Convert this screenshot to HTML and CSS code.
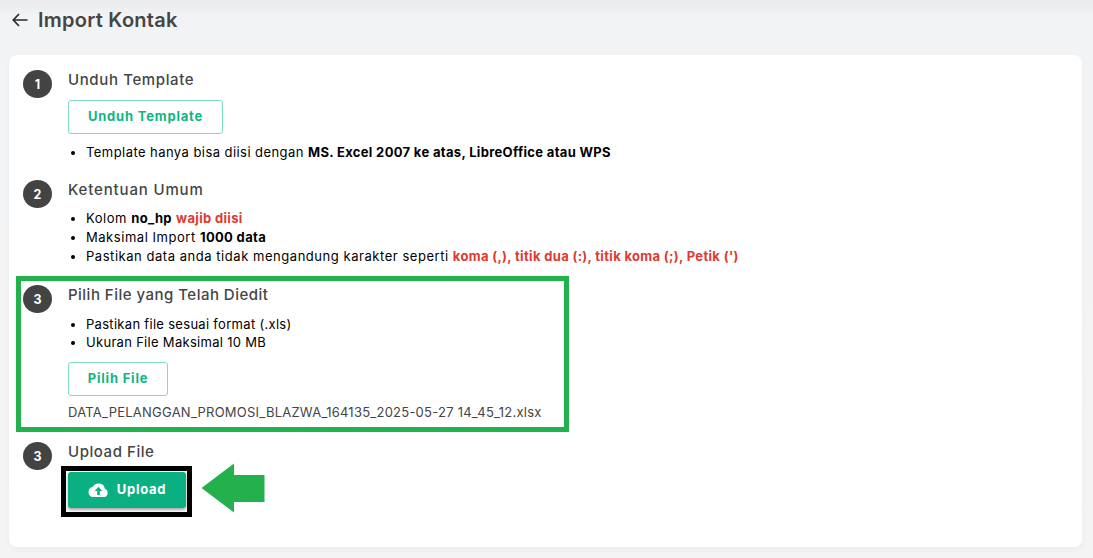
FILE: index.html
```html
<!DOCTYPE html>
<html lang="id">
<head>
<meta charset="utf-8">
<title>Import Kontak</title>
<link rel="stylesheet" href="styles.css">
</head>
<body>
<header class="topbar">
  <svg class="back" viewBox="0 0 16 14" width="16" height="14"><path d="M15.500 7H1.500M7 1 1.300 7 7 13" fill="none" stroke="#2b2b2b" stroke-width="1.700"/></svg>
  <h1>Import Kontak</h1>
</header>
<main class="card">
  <section class="step step-one">
    <span class="num">1</span>
    <div class="body">
      <h2>Unduh Template</h2>
      <button class="outline wide">Unduh Template</button>
      <ul class="list-one"><li>Template hanya bisa diisi dengan <b>MS. Excel 2007 ke atas, LibreOffice atau WPS</b></li></ul>
    </div>
  </section>
  <section class="step step-two">
    <span class="num">2</span>
    <div class="body">
      <h2>Ketentuan Umum</h2>
      <ul class="list-two">
        <li>Kolom <b>no_hp</b> <b class="red">wajib diisi</b></li>
        <li>Maksimal Import <b>1000 data</b></li>
        <li>Pastikan data anda tidak mengandung karakter seperti <b class="red">koma (,), titik dua (:), titik koma (;), Petik (')</b></li>
      </ul>
    </div>
  </section>
  <section class="step step-three">
    <span class="num">3</span>
    <div class="body">
      <h2>Pilih File yang Telah Diedit</h2>
      <ul class="list-three">
        <li>Pastikan file sesuai format (.xls)</li>
        <li>Ukuran File Maksimal 10 MB</li>
      </ul>
      <button class="outline narrow">Pilih File</button>
      <p class="filename">DATA_PELANGGAN_PROMOSI_BLAZWA_164135_2025-05-27 14_45_12.xlsx</p>
    </div>
    <div class="mark"></div>
  </section>
  <section class="step step-four">
    <span class="num">3</span>
    <div class="body">
      <h2>Upload File</h2>
      <div class="upload-row">
        <div class="black-frame">
          <button class="upload">
            <svg viewBox="0 0 24 16" width="21" height="14"><path fill="#fff" d="M19.300 6.600A7.400 7.400 0 0 0 12 .5a7.300 7.300 0 0 0-6.600 4A5.800 5.800 0 0 0 6 16h13a5 5 0 0 0 .3-9.400Z"/><path fill="#0bb082" d="M12 4.200 7.600 9h2.900v4.600h3V9h2.900Z"/></svg>
            <span class="upload-label">Upload</span>
          </button>
        </div>
        <svg class="arrow" viewBox="0 0 64 50" width="64" height="50"><path fill="#22b14c" d="M0.500 25 33 .5V12h30.500v27H33v10.500Z"/></svg>
      </div>
    </div>
  </section>
</main>
</body>
</html>
```
FILE: styles.css
```css
* { box-sizing: border-box; }
html, body { margin: 0; height: 558px; overflow: hidden; }
body {
  background: linear-gradient(#e9eaec 0, #f2f3f4 16px, #f4f4f5 100%);
  font-family: Inter, "Open Sans", sans-serif;
  color: #000;
  padding: 0 11px 0 9px;
}
.topbar { height: 55px; display: flex; align-items: flex-start; padding: 13px 0 0 3px; gap: 10px; }
h1 { margin: -5px 0 0; font-size: 20px; line-height: 24px; font-weight: 600; color: #454545; letter-spacing: 0.25px; }
.card {
  height: 492px;
  background: #fff;
  border-radius: 8px;
  padding: 15px 0 0 14px;
  box-shadow: 0 2px 6px rgba(0,0,0,.04);
}
.step { display: flex; position: relative; gap: 16px; }
.num {
  flex: none;
  width: 29px; height: 28px;
  border-radius: 50%;
  background: #434343;
  color: #fff;
  font-size: 12.500px;
  font-weight: 700;
  display: flex; align-items: center; justify-content: center;
}
.body { min-width: 0; }
h2 { margin: 0; font-size: 15px; line-height: 20px; font-weight: 500; color: #454545; letter-spacing: 0.55px; }
.step-one h2 { letter-spacing: 0.62px; }
.step-two h2 { letter-spacing: 0.85px; }
.step-three h2 { letter-spacing: 0.48px; }
ul { margin: 0; padding: 0 0 0 18px; font-size: 13px; letter-spacing: 0.5px; }
b { font-weight: 700; letter-spacing: 0.33px; }
.red { color: #e0392f; }
.outline {
  display: block;
  height: 34px;
  padding: 0 0 2px;
  background: #fff;
  border: 1px solid #7fdcc0;
  border-radius: 3px;
  color: #0fb584;
  font: 700 13px Inter, sans-serif;
  letter-spacing: 0.8px;
}
.wide { width: 155px; margin-top: 10px; padding-bottom: 3px; }
.narrow { width: 100px; margin-top: 11px; }
.list-one { margin-top: 9px; line-height: 18px; letter-spacing: 0.44px; }
.step-two { margin-top: 19px; }
.list-two { margin-top: 9px; line-height: 19px; letter-spacing: 0.54px; }
.step-three { margin-top: 19px; height: 147px; }
.list-three { margin-top: 10px; line-height: 18px; letter-spacing: 0.3px; }
.filename { margin: 6px 0 0; font-size: 13px; line-height: 20px; color: #454545; letter-spacing: 0.24px; white-space: nowrap; }
.mark {
  position: absolute;
  left: -7px; top: -9px;
  width: 553px; height: 156px;
  border: 5px solid #22b14c;
}
.step-four { margin-top: 10px; }
.upload-row { display: flex; align-items: flex-start; margin: 4px 0 0 -7px; }
.black-frame { width: 131px; height: 51px; border: 5px solid #000; padding: 1px 0 0 2px; }
.upload {
  display: flex; align-items: center; justify-content: center; gap: 8px;
  width: 118px; height: 36px;
  padding: 0;
  background: #0bb082;
  border: 0; border-radius: 3px;
  box-shadow: 0 2px 3px rgba(0,0,0,.35);
  color: #fff;
  font: 700 13px Inter, sans-serif;
  letter-spacing: 0.7px;
}
.upload-label { padding-bottom: 3px; }
.arrow { margin: -3px 0 0 9px; }
```
